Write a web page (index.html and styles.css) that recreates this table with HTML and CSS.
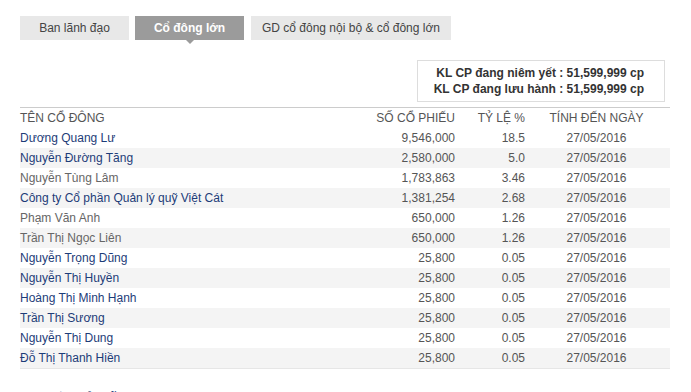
FILE: index.html
```html
<!DOCTYPE html>
<html lang="vi">
<head>
<meta charset="utf-8">
<link rel="stylesheet" href="styles.css">
</head>
<body>
<div class="page">
  <div class="tabs">
    <div class="tab t1">Ban lãnh đạo</div>
    <div class="tab t2 active">Cổ đông lớn</div>
    <div class="tab t3">GD cổ đông nội bộ &amp; cổ đông lớn</div>
  </div>
  <div class="summary-wrap">
    <div class="summary">
      <div>KL CP đang niêm yết : 51,599,999 cp</div>
      <div>KL CP đang lưu hành : 51,599,999 cp</div>
    </div>
  </div>
  <div class="table">
    <div class="row head">
      <div class="c-name">TÊN CỔ ĐÔNG</div>
      <div class="c-num">SỐ CỔ PHIẾU</div>
      <div class="c-pct">TỶ LỆ %</div>
      <div class="c-date">TÍNH ĐẾN NGÀY</div>
    </div>
    <div class="row"><div class="c-name link">Dương Quang Lư</div><div class="c-num">9,546,000</div><div class="c-pct">18.5</div><div class="c-date">27/05/2016</div></div>
    <div class="row alt"><div class="c-name link">Nguyễn Đường Tăng</div><div class="c-num">2,580,000</div><div class="c-pct">5.0</div><div class="c-date">27/05/2016</div></div>
    <div class="row"><div class="c-name plain">Nguyễn Tùng Lâm</div><div class="c-num">1,783,863</div><div class="c-pct">3.46</div><div class="c-date">27/05/2016</div></div>
    <div class="row alt"><div class="c-name link">Công ty Cổ phần Quản lý quỹ Việt Cát</div><div class="c-num">1,381,254</div><div class="c-pct">2.68</div><div class="c-date">27/05/2016</div></div>
    <div class="row"><div class="c-name plain">Phạm Văn Anh</div><div class="c-num">650,000</div><div class="c-pct">1.26</div><div class="c-date">27/05/2016</div></div>
    <div class="row alt"><div class="c-name plain">Trần Thị Ngọc Liên</div><div class="c-num">650,000</div><div class="c-pct">1.26</div><div class="c-date">27/05/2016</div></div>
    <div class="row"><div class="c-name link">Nguyễn Trọng Dũng</div><div class="c-num">25,800</div><div class="c-pct">0.05</div><div class="c-date">27/05/2016</div></div>
    <div class="row alt"><div class="c-name link">Nguyễn Thị Huyền</div><div class="c-num">25,800</div><div class="c-pct">0.05</div><div class="c-date">27/05/2016</div></div>
    <div class="row"><div class="c-name link">Hoàng Thị Minh Hạnh</div><div class="c-num">25,800</div><div class="c-pct">0.05</div><div class="c-date">27/05/2016</div></div>
    <div class="row alt"><div class="c-name link">Trần Thị Sương</div><div class="c-num">25,800</div><div class="c-pct">0.05</div><div class="c-date">27/05/2016</div></div>
    <div class="row"><div class="c-name link">Nguyễn Thị Dung</div><div class="c-num">25,800</div><div class="c-pct">0.05</div><div class="c-date">27/05/2016</div></div>
    <div class="row alt"><div class="c-name link">Đỗ Thị Thanh Hiền</div><div class="c-num">25,800</div><div class="c-pct">0.05</div><div class="c-date">27/05/2016</div></div>
  </div>
  <h2 class="section-title">CƠ CẤU SỞ HỮU</h2>
</div>
</body>
</html>
```
FILE: styles.css
```css
html, body {
  margin: 0;
  padding: 0;
  background: #fff;
}
body {
  font-family: "Liberation Sans", Arial, sans-serif;
  font-size: 12px;
  color: #555;
}
.page {
  width: 650px;
  padding: 16px 0 0 20px;
}
.tabs {
  display: flex;
  gap: 6px;
  height: 24px;
}
.tab {
  position: relative;
  display: flex;
  align-items: center;
  justify-content: center;
  height: 24px;
  background: #e8e8e8;
  color: #444;
  font-size: 12px;
}
.t1 { width: 109px; }
.t2 { width: 109px; }
.t3 { width: 200px; margin-left: 1px; }
.tab.active {
  background: #9b9b9b;
  color: #fff;
  font-weight: bold;
}
.tab.active::after {
  content: "";
  position: absolute;
  left: 50%;
  bottom: -4px;
  margin-left: -4px;
  border-left: 4px solid transparent;
  border-right: 4px solid transparent;
  border-top: 4px solid #9b9b9b;
}
.summary-wrap {
  display: flex;
  justify-content: flex-end;
  padding: 20px 5px 0 0;
}
.summary {
  width: 246px;
  height: 40px;
  border: 1px solid #ddd;
  display: flex;
  flex-direction: column;
  justify-content: center;
  align-items: flex-end;
  font-weight: bold;
  color: #333;
  font-size: 12px;
  line-height: 16px;
}
.summary div {
  padding-right: 20px;
}
.table {
  margin-top: 5px;
  border-top: 1px solid #ccc;
  border-bottom: 1px solid #e6e6e6;
}
.row {
  display: grid;
  grid-template-columns: 335px 100px 70px 145px;
  height: 20px;
  align-items: center;
  line-height: 20px;
}
.row.alt {
  background: #f4f4f4;
}
.c-num { text-align: right; }
.c-pct { text-align: right; }
.c-date { text-align: center; padding-right: 2px; }
.head div { color: #555; }
.link { color: #1d3c78; }
.plain { color: #666; }
.section-title {
  margin: 22px 0 0;
  font-size: 13px;
  font-weight: bold;
  color: #1d3c78;
}
```
